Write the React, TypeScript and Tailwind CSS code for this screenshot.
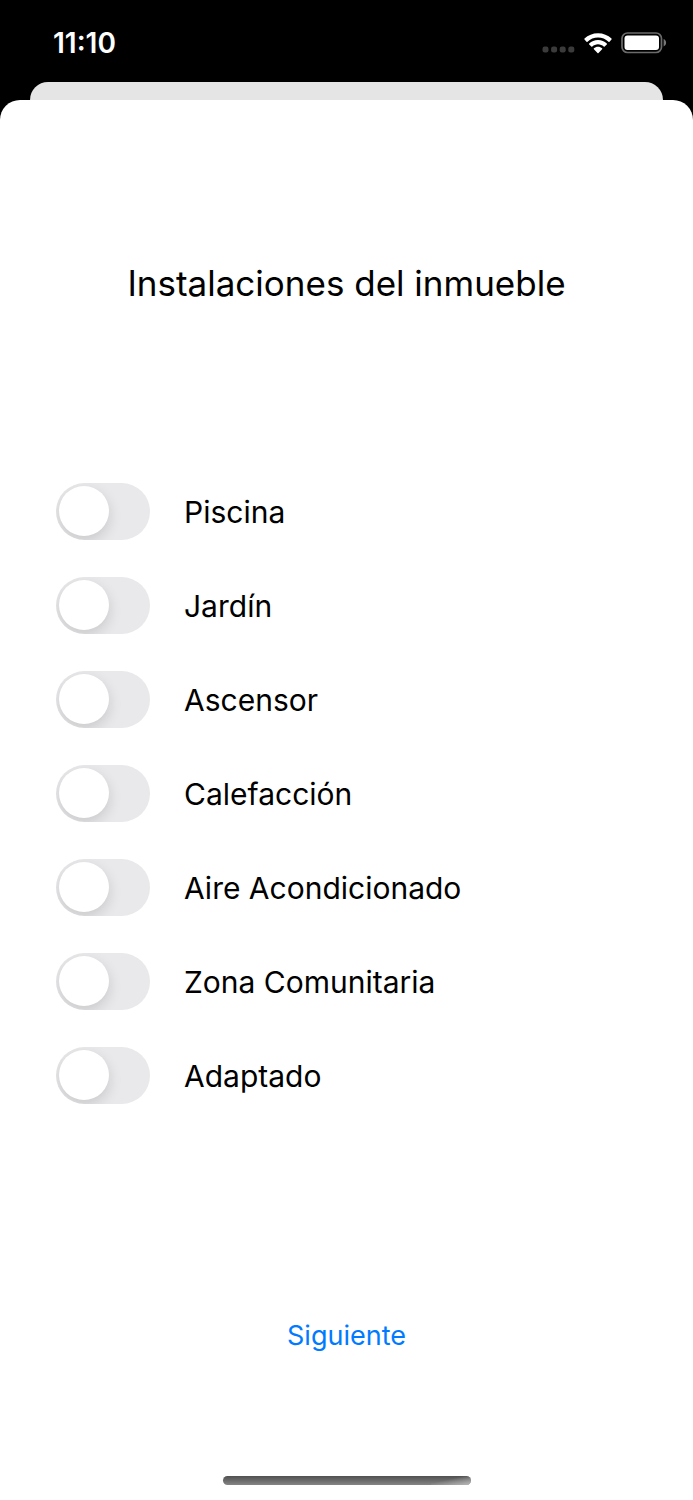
import { useState } from "react";

const FACILITIES = [
  "Piscina",
  "Jardín",
  "Ascensor",
  "Calefacción",
  "Aire Acondicionado",
  "Zona Comunitaria",
  "Adaptado",
];

function WifiIcon() {
  return (
    <svg width="28" height="21" viewBox="0 0 28 21" fill="#fff" aria-hidden="true">
      <path d="M14 0.3C8.8 0.3 4 2.3 0.5 5.6c-.3.3-.3.7 0 1l2 2.1c.3.3.7.3 1 0C6.300 6.100 10 4.500 14 4.500s7.700 1.600 10.500 4.200c.3.300.7.300 1 0l2-2.100c.3-.3.3-.7 0-1C24 2.300 19.200.300 14 .300Z" />
      <path d="M14 7c-3.400 0-6.500 1.300-8.800 3.500-.3.300-.3.700 0 1l2.100 2.100c.3.300.7.300 1 0 1.500-1.400 3.500-2.300 5.700-2.300s4.200.9 5.700 2.300c.3.300.7.300 1 0l2.100-2.100c.3-.3.3-.7 0-1C20.500 8.300 17.400 7 14 7Z" />
      <path d="M14 13.800c-1.600 0-3 .6-4.100 1.500-.3.300-.3.700 0 1l3.600 3.800c.3.300.7.300 1 0l3.600-3.800c.3-.3.3-.7 0-1-1.100-.9-2.500-1.500-4.100-1.500Z" />
    </svg>
  );
}

function BatteryIcon() {
  return (
    <svg width="46" height="22" viewBox="0 0 46 22" aria-hidden="true">
      <rect x="1" y="1" width="39.500" height="19.500" rx="5.500" fill="none" stroke="#6b6b6b" strokeWidth="1.700" />
      <rect x="3.500" y="3.500" width="34.500" height="14.500" rx="3" fill="#fff" />
      <path d="M42.600 7v7.500c1.500-.6 2.500-2 2.500-3.700s-1-3.200-2.500-3.800Z" fill="#767676" />
    </svg>
  );
}

function StatusBar() {
  return (
    <header className="flex h-[82px] items-start justify-between pt-[27px] pr-[26px] pl-[53px] text-white">
      <time className="text-[28px] leading-8 font-semibold">11:10</time>
      <div className="flex h-8 items-center gap-[9px]">
        <svg className="mt-[13px]" width="33" height="7" viewBox="0 0 33 7" fill="#3b3b3b" aria-hidden="true">
          <rect x="0.500" y="0.500" width="6" height="6" rx="2.200" />
          <rect x="9.100" y="0.500" width="6" height="6" rx="2.200" />
          <rect x="17.700" y="0.500" width="6" height="6" rx="2.200" />
          <rect x="26.300" y="0.500" width="6" height="6" rx="2.200" />
        </svg>
        <WifiIcon />
        <BatteryIcon />
      </div>
    </header>
  );
}

function ToggleRow({ label }: { label: string }) {
  const [on, setOn] = useState(false);
  return (
    <li>
      <label className="flex items-center gap-[34px] text-[30px] leading-9">
        <input
          type="checkbox"
          role="switch"
          checked={on}
          onChange={(e) => setOn(e.target.checked)}
          className="h-[57px] w-[94px] shrink-0 cursor-pointer appearance-none overflow-hidden rounded-full bg-[#e9e9eb] p-[3px] before:block before:size-[50px] before:rounded-full before:bg-white before:shadow-[0_5px_14px_rgba(0,0,0,0.14)] checked:bg-[#34c759] checked:before:ml-auto"
        />
        {label}
      </label>
    </li>
  );
}

export default function App() {
  return (
    <div className="flex min-h-screen flex-col bg-black font-['Inter','Liberation_Sans',sans-serif] text-black">
      <StatusBar />
      <div className="mx-[30px] h-[18px] rounded-t-[18px] bg-[#e5e5e5]" />
      <main className="flex flex-1 flex-col rounded-t-[20px] bg-white px-14 pt-[161px] pb-[15px]">
        <h1 className="text-center text-[35px] leading-[44px]">Instalaciones del inmueble</h1>
        <ul className="mt-[178px] flex flex-col gap-[37px]">
          {FACILITIES.map((name) => (
            <ToggleRow key={name} label={name} />
          ))}
        </ul>
        <button type="button" className="mt-[212px] cursor-pointer self-center text-[27px] leading-10 text-[#007aff]">
          Siguiente
        </button>
        <div className="mt-auto h-[9px] w-[248px] self-center overflow-hidden rounded-full bg-linear-to-b from-[#505050] to-[#858585]">
          <div className="ml-auto h-full w-10 bg-linear-to-br from-transparent from-40% to-[#b8b8b8]" />
        </div>
      </main>
    </div>
  );
}
